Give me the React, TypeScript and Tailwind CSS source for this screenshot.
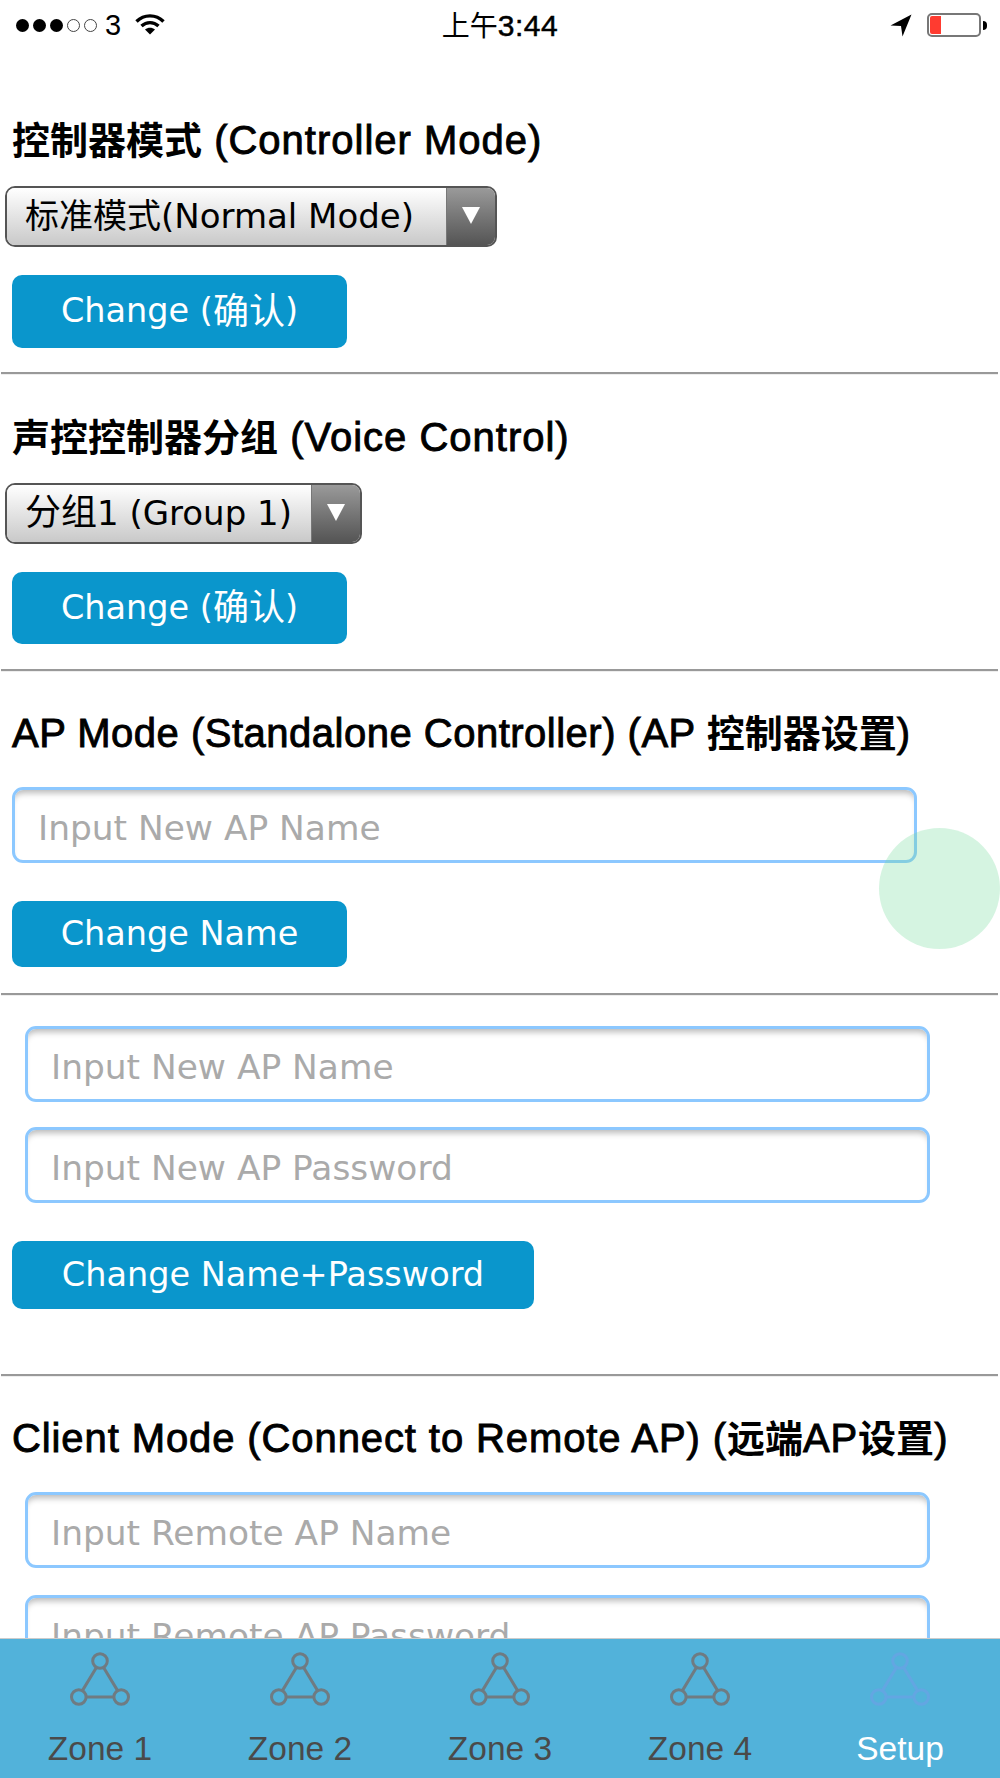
import React from "react";

const dv = "font-['DejaVu_Sans','Noto_Sans_CJK_SC',sans-serif]";

function StatusBar() {
  return (
    <div className="relative flex h-[50px] shrink-0 items-center justify-between pl-4 pr-[13px] font-['Liberation_Sans','Noto_Sans_CJK_SC',sans-serif] text-black">
      <div className="flex items-center">
        <div className="flex items-center gap-[4px]">
          <span className="h-[13px] w-[13px] rounded-full bg-black" />
          <span className="h-[13px] w-[13px] rounded-full bg-black" />
          <span className="h-[13px] w-[13px] rounded-full bg-black" />
          <span className="h-[13px] w-[13px] rounded-full border border-[#444]" />
          <span className="h-[13px] w-[13px] rounded-full border border-[#444]" />
        </div>
        <span className="ml-[8px] text-[29px] leading-none">3</span>
        <svg className="ml-[14px] -mt-[3px]" width="30" height="22" viewBox="0 0 30 22">
          <path d="M1.5 8.5C9 1 21 1 28.5 8.5" fill="none" stroke="#000" strokeWidth="3.4" />
          <path d="M6.5 13C11.5 8.5 18.5 8.5 23.5 13" fill="none" stroke="#000" strokeWidth="3.4" />
          <path d="M10 16.5L15 21.5L20 16.5C17 14.3 13 14.3 10 16.5Z" fill="#000" />
        </svg>
      </div>
      <div className="absolute inset-x-0 top-[9px] flex items-baseline justify-center leading-[34px]">
        <span className="text-[28px]">上午</span>
        <span className="text-[30px] tracking-[0.5px] [-webkit-text-stroke:0.5px_black]">3:44</span>
      </div>
      <div className="flex items-center">
        <svg width="22" height="23" viewBox="0 0 22 23">
          <path d="M21.5 0.5L0.5 11.5L11 12L12.5 22.5Z" fill="#000" />
        </svg>
        <div className="ml-[15px] flex h-[24px] w-[54px] rounded-[5px] border-2 border-[#777] p-px">
          <div className="h-full w-[11px] rounded-l-[2px] bg-[#ff3b30]" />
        </div>
        <div className="ml-[2px] h-[9px] w-[4px] rounded-r-full bg-black" />
      </div>
    </div>
  );
}

function Cjk({ children }: { children: React.ReactNode }) {
  return <span className="text-[38px] font-bold leading-none tracking-normal [-webkit-text-stroke:0]">{children}</span>;
}

function Heading({ children, className }: { children: React.ReactNode; className: string }) {
  return (
    <h2
      className={`ml-3 whitespace-nowrap font-['Liberation_Sans','Noto_Sans_CJK_SC',sans-serif] text-[40px] font-normal leading-[46px] text-black [-webkit-text-stroke:0.9px_black] ${className}`}
    >
      {children}
    </h2>
  );
}

function Select({ label, width, className }: { label: React.ReactNode; width: string; className: string }) {
  return (
    <div className={`ml-[5px] flex overflow-hidden rounded-[10px] border-2 border-[#555] ${width} ${className}`}>
      <div className={`flex-1 whitespace-nowrap bg-gradient-to-b from-white to-[#c9c9c9] pl-[18px] text-[34px] leading-[57px] text-black ${dv}`}>
        {label}
      </div>
      <div className="flex w-[49px] shrink-0 justify-center border-l border-[#777] bg-gradient-to-b from-[#9a9a9a] to-[#555] pt-[19px]">
        <svg width="18" height="17" viewBox="0 0 18 17">
          <path d="M0 0H18L9 17Z" fill="#fff" />
        </svg>
      </div>
    </div>
  );
}

function Btn({ children, className }: { children: React.ReactNode; className: string }) {
  return (
    <div
      className={`ml-3 flex items-center justify-center whitespace-pre rounded-[10px] bg-[#0a96cc] text-[33.5px] text-white ${dv} ${className}`}
    >
      {children}
    </div>
  );
}

function Hr({ className }: { className: string }) {
  return <div className={`ml-px mr-[2px] h-[3px] border-t-2 border-b border-t-[#999] border-b-[#eee] ${className}`} />;
}

function Field({ placeholder, className }: { placeholder: string; className: string }) {
  return (
    <input
      readOnly
      placeholder={placeholder}
      className={`block h-[76px] rounded-[11px] border-[3px] border-[#8cc8ff] bg-white pl-[23px] pt-[6px] text-[34.4px] shadow-[inset_0_7px_6px_-4px_rgba(0,0,0,0.28)] outline-none placeholder:text-[#aaa] ${dv} ${className}`}
    />
  );
}

function ZoneIcon({ color }: { color: string }) {
  return (
    <svg width="60" height="54" viewBox="0 0 60 54" fill="none" stroke={color} strokeWidth="3">
      <circle cx="30" cy="9" r="7.3" />
      <circle cx="8.8" cy="45" r="7.3" />
      <circle cx="51.2" cy="45" r="7.3" />
      <path d="M26.4 15.4L12.4 38.6M33.6 15.4L47.6 38.6M16.1 45H43.9" />
    </svg>
  );
}

function Tab({ label, active }: { label: string; active?: boolean }) {
  return (
    <div className="flex flex-col items-center pt-[13px]">
      <ZoneIcon color={active ? "#63a6e2" : "#6f7b82"} />
      <div className={`mt-[24px] text-[33.5px] leading-[37px] ${active ? "text-white" : "text-[#4a4a4a]"}`}>{label}</div>
    </div>
  );
}

export default function App() {
  return (
    <div className="relative flex h-[1778px] w-[1000px] flex-col overflow-hidden bg-white">
      <StatusBar />
      <div className="min-h-0 flex-1 overflow-hidden">
        <Heading className="mt-[67px] tracking-[1px]"><Cjk>控制器模式</Cjk> (Controller Mode)</Heading>
        <Select className="mt-[23px]" width="w-[492px]" label="标准模式(Normal Mode)" />
        <Btn className="mt-[28px] h-[73px] w-[335px]">Change (<span className="text-[36px]">确认</span>)</Btn>
        <Hr className="mt-[24px]" />
        <Heading className="mt-[39px] tracking-[1px]"><Cjk>声控控制器分组</Cjk> (Voice Control)</Heading>
        <Select className="mt-[23px]" width="w-[357px]" label={<><span className="text-[36px] leading-none">分组</span>1 (Group 1)</>} />
        <Btn className="mt-[28px] h-[72px] w-[335px]">Change (<span className="text-[36px]">确认</span>)</Btn>
        <Hr className="mt-[25px]" />
        <Heading className="mt-[38px] tracking-[0.5px]">AP Mode (Standalone Controller) (AP <Cjk>控制器设置</Cjk>)</Heading>
        <Field className="mt-[31px] ml-3 w-[905px]" placeholder="Input New AP Name" />
        <Btn className="mt-[38px] h-[66px] w-[335px]">Change Name</Btn>
        <Hr className="mt-[26px]" />
        <Field className="mt-[30px] ml-[25px] w-[905px]" placeholder="Input New AP Name" />
        <Field className="mt-[25px] ml-[25px] w-[905px]" placeholder="Input New AP Password" />
        <Btn className="mt-[38px] h-[68px] w-[522px]">Change Name+Password</Btn>
        <Hr className="mt-[65px]" />
        <Heading className="mt-[38px] tracking-[0.9px]">Client Mode (Connect to Remote AP) (<Cjk>远端</Cjk>AP<Cjk>设置</Cjk>)</Heading>
        <Field className="mt-[31px] ml-[25px] w-[905px]" placeholder="Input Remote AP Name" />
        <Field className="mt-[27px] ml-[25px] w-[905px]" placeholder="Input Remote AP Password" />
      </div>
      <div className="grid h-[140px] shrink-0 grid-cols-5 border-t border-[#ccc] bg-[#52b2da] font-['Liberation_Sans',sans-serif]">
        <Tab label="Zone 1" />
        <Tab label="Zone 2" />
        <Tab label="Zone 3" />
        <Tab label="Zone 4" />
        <Tab label="Setup" active />
      </div>
      <div className="absolute left-[879px] top-[828px] h-[121px] w-[121px] rounded-full bg-[#73d99c]/30" />
    </div>
  );
}
